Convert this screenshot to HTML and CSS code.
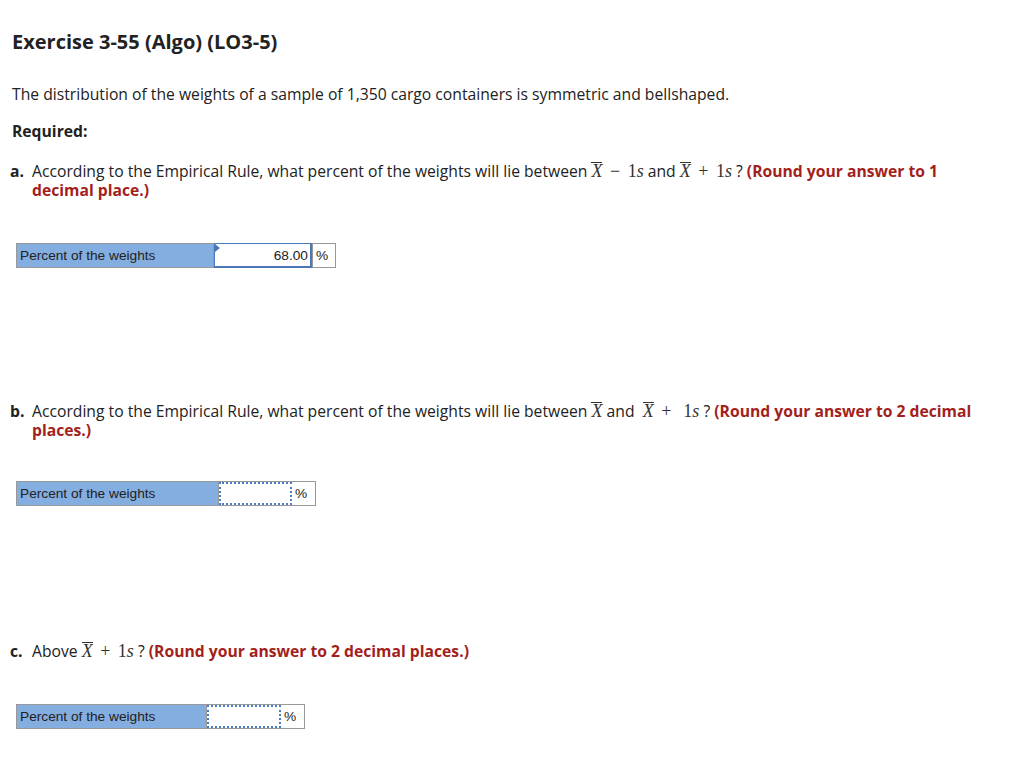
FILE: index.html
```html
<!DOCTYPE html>
<html>
<head>
<meta charset="utf-8">
<link rel="stylesheet" href="styles.css">
</head>
<body>
<div class="page">
  <h1 class="title">Exercise 3-55 (Algo) (LO3-5)</h1>
  <p class="intro">The distribution of the weights of a sample of 1,350 cargo containers is symmetric and bellshaped.</p>
  <p class="req">Required:</p>

  <div class="q q-a">
    <span class="ql">a.</span>
    <div class="qt">According to the Empirical Rule, what percent of the weights will lie between <span class="m"><span class="xbar">X</span> <span class="op">−</span> 1<i>s</i></span> and <span class="m"><span class="xbar">X</span> <span class="op">+</span> 1<i>s</i></span> ? <b class="red">(Round your answer to 1</b> <b class="red">decimal place.)</b></div>
  </div>
  <div class="ans ans-a">
    <div class="lab">Percent of the weights</div>
    <div class="inp filled">68.00</div>
    <div class="pct">%</div>
  </div>

  <div class="q q-b">
    <span class="ql">b.</span>
    <div class="qt">According to the Empirical Rule, what percent of the weights will lie between <span class="m"><span class="xbar">X</span></span> and &nbsp;<span class="m"><span class="xbar">X</span> <span class="op">+</span> &nbsp;1<i>s</i></span> ? <b class="red">(Round your answer to 2 decimal</b> <b class="red">places.)</b></div>
  </div>
  <div class="ans ans-b">
    <div class="lab">Percent of the weights</div>
    <div class="inp empty"></div>
    <div class="pct">%</div>
  </div>

  <div class="q q-c">
    <span class="ql">c.</span>
    <div class="qt">Above <span class="m"><span class="xbar">X</span> <span class="op">+</span> 1<i>s</i></span> ? <b class="red">(Round your answer to 2 decimal places.)</b></div>
  </div>
  <div class="ans ans-c">
    <div class="lab">Percent of the weights</div>
    <div class="inp empty"></div>
    <div class="pct">%</div>
  </div>
</div>
</body>
</html>
```

FILE: styles.css
```css
html, body {
  margin: 0;
  padding: 0;
  background: #fff;
}
body {
  font-family: "Open Sans", "Lato", sans-serif;
  color: #222;
  font-size: 15.7px;
}
.page {
  padding: 30px 12px 0 12px;
}
.title {
  margin: 0;
  font-size: 20px;
  line-height: 24px;
  font-weight: 700;
  color: #222;
}
.intro {
  margin: 28px 0 0 0;
  line-height: 24px;
}
.req {
  margin: 13px 0 0 0;
  font-weight: 700;
  line-height: 24px;
}
.q {
  display: flex;
  line-height: 19px;
  margin: 19px 0 0 -2px;
}
.ql {
  width: 22px;
  flex: none;
  font-weight: 700;
}
.qt {
  flex: 1;
  padding-right: 22px;
}
.red {
  color: #a31f1c;
  font-weight: 700;
}
.m {
  font-family: "Liberation Serif", "DejaVu Serif", serif;
  font-size: 18px;
  line-height: 19px;
  color: #333;
}
.m i {
  font-style: italic;
}
.xbar {
  font-style: italic;
  display: inline-block;
  border-top: 1px solid #333;
  line-height: 14px;
  padding-top: 1px;
}
.op {
  margin: 0 3px;
}
.ans {
  display: flex;
  height: 25px;
  margin-left: 4px;
  border: 1px solid #999;
  box-sizing: border-box;
  font-family: "Liberation Sans", Arial, sans-serif;
  font-size: 13.7px;
  color: #222;
}
.ans-a { width: 320px; margin-top: 43px; }
.ans-b { width: 300px; margin-top: 41px; }
.ans-c { width: 289px; margin-top: 43px; }
.q-b { margin-top: 134px; }
.q-c { margin-top: 136px; }
.lab {
  background: #84ade0;
  display: flex;
  align-items: center;
  padding-left: 3px;
  box-sizing: border-box;
  border-right: 1px solid #999;
}
.ans-a .lab { width: 197px; }
.ans-b .lab { width: 202px; }
.ans-c .lab { width: 190px; }
.inp {
  box-sizing: border-box;
  display: flex;
  align-items: center;
  justify-content: flex-end;
  position: relative;
}
.inp.filled {
  width: 98px;
  margin: -1px 0 -1px 0;
  height: 25px;
  padding-right: 2px;
  border-left: 1px solid #4a78b8;
  border-top: 1px solid #4a78b8;
  border-right: 2px solid #4a78b8;
  border-bottom: 2px solid #4a78b8;
  background: #fff;
}
.inp.filled::before {
  content: "";
  position: absolute;
  left: 0;
  top: 0;
  border-top: 4px solid transparent;
  border-bottom: 4px solid transparent;
  border-left: 5px solid #4a78b8;
}
.inp.empty {
  border: 2px dotted #4a7cc6;
  margin: 0;
  height: 23px;
}
.ans-b .inp.empty { width: 73px; }
.ans-c .inp.empty { width: 74px; }
.pct {
  flex: 1;
  display: flex;
  align-items: center;
  padding-left: 3px;
  background: #fff;
}
.ans-a .pct { border-left: 1px solid #999; }
```
